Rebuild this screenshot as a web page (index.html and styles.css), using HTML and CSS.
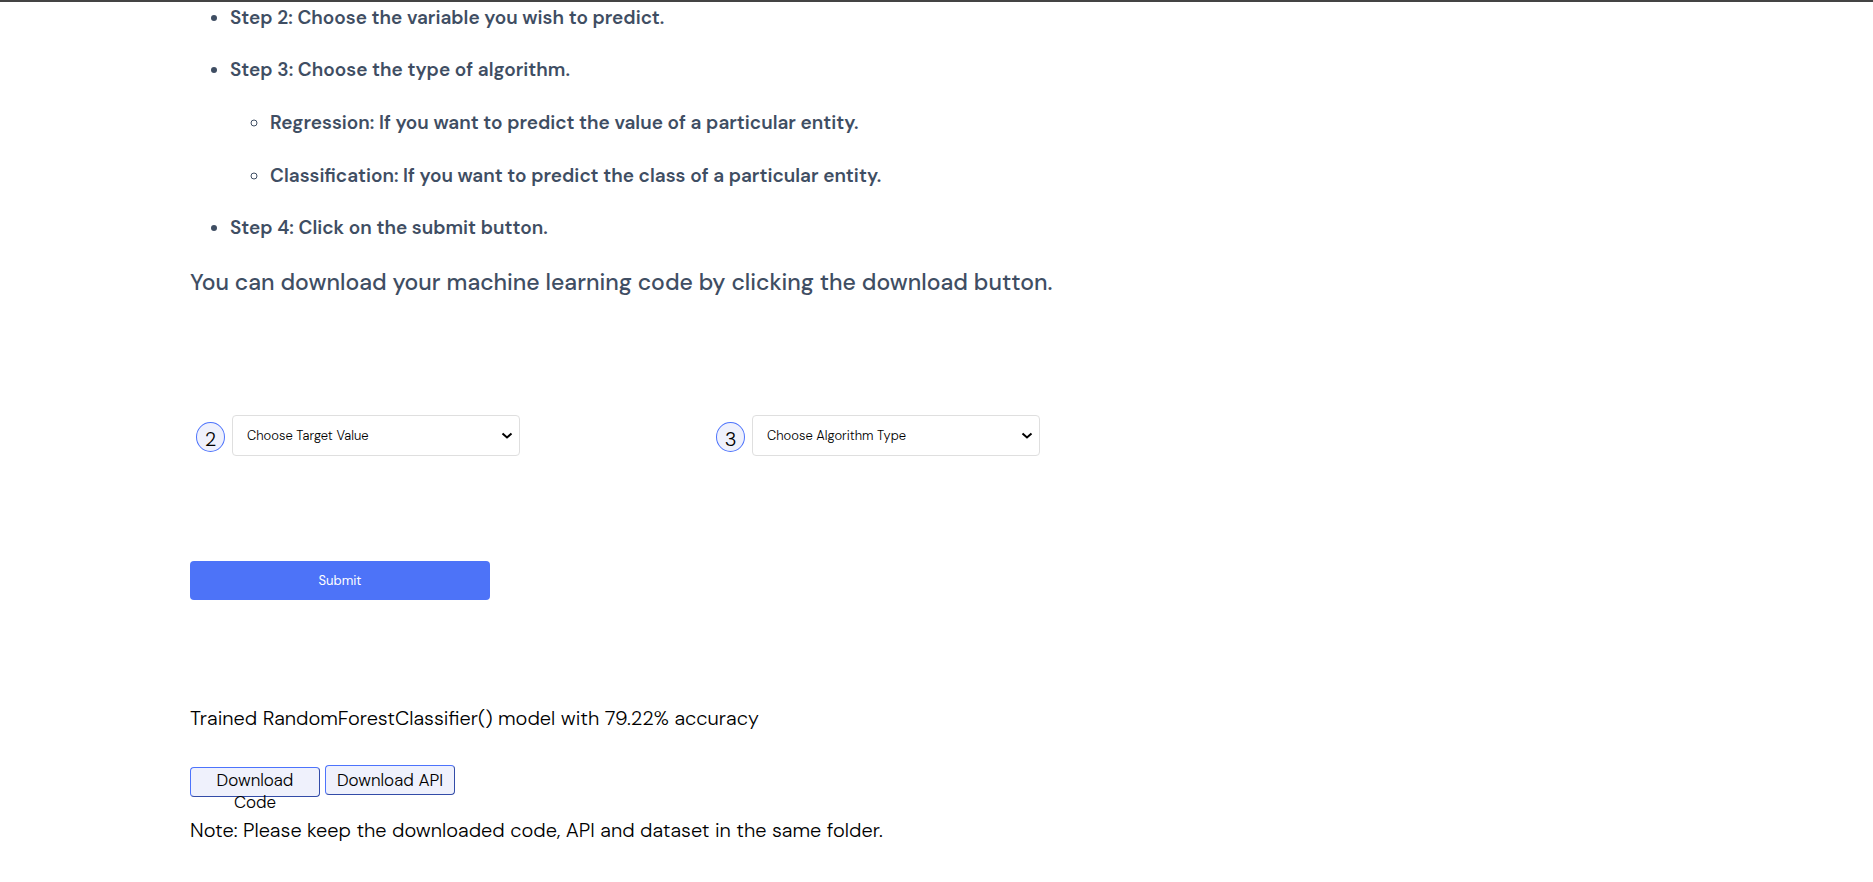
FILE: index.html
```
<!DOCTYPE html>
<html lang="en">
<head>
<meta charset="utf-8">
<title>Train a model</title>
<link rel="stylesheet" href="styles.css">
</head>
<body>
<main class="page">
  <section class="guide">
    <ul class="steps">
      <li>Step 2: Choose the variable you wish to predict.</li>
      <li>Step 3: Choose the type of algorithm.
        <ul class="substeps">
          <li>Regression: If you want to predict the value of a particular entity.</li>
          <li>Classification: If you want to predict the class of a particular entity.</li>
        </ul>
      </li>
      <li>Step 4: Click on the submit button.</li>
    </ul>
    <h2 class="summary">You can download your machine learning code by clicking the download button.</h2>
  </section>
  <form class="form">
    <div class="fields">
      <div class="field">
        <label class="badge" for="target">2</label>
        <div class="select-wrap">
          <select class="select" id="target"><option>Choose Target Value</option></select>
          <svg class="chevron" viewBox="0 0 12 8" aria-hidden="true"><path d="M1.5 1.500L6 5.500l4.500-4"/></svg>
        </div>
      </div>
      <div class="field">
        <label class="badge" for="algorithm">3</label>
        <div class="select-wrap">
          <select class="select" id="algorithm"><option>Choose Algorithm Type</option></select>
          <svg class="chevron" viewBox="0 0 12 8" aria-hidden="true"><path d="M1.5 1.500L6 5.500l4.500-4"/></svg>
        </div>
      </div>
    </div>
    <button class="submit" type="button">Submit</button>
  </form>
  <section class="result">
    <p class="text">Trained RandomForestClassifier() model with 79.22% accuracy</p>
    <div class="downloads">
      <button class="download" type="button">Download Code</button>
      <button class="download" type="button">Download API</button>
    </div>
    <p class="text">Note: Please keep the downloaded code, API and dataset in the same folder.</p>
  </section>
</main>
</body>
</html>
```
FILE: styles.css
```
* { box-sizing: border-box; }
body {
  margin: 0;
  background: #fff;
  color: #000;
  font-family: "DM Sans", Inter, sans-serif;
}
.page {
  border-top: 2px solid #444;
  padding: 3px 190px 32px;
}
.guide { color: #3f4e63; }
.steps, .substeps {
  display: grid;
  margin: 0;
  padding-left: 40px;
  font-size: 19px;
  font-weight: 600;
  line-height: 26px;
}
.steps { gap: 26px; }
.substeps { gap: 27px; margin-top: 27px; }
.summary {
  margin: 25px 0 0;
  font-size: 23px;
  font-weight: 500;
  line-height: 32px;
}
.form { margin-top: 117px; }
.fields {
  display: grid;
  grid-template-columns: 520px 1fr;
}
.field {
  display: flex;
  align-items: center;
  gap: 7px;
  padding-left: 6px;
}
.badge {
  width: 29px;
  height: 30px;
  margin-top: 3px;
  border: 1px solid #4d73fc;
  border-radius: 50%;
  background: #eff1fc;
  font-size: 20px;
  font-weight: 300;
  line-height: 32px;
  text-align: center;
}
.select-wrap {
  position: relative;
  width: 288px;
}
.select {
  display: block;
  width: 100%;
  height: 41px;
  padding: 0 14px;
  appearance: none;
  border: 1px solid #dfdfdf;
  border-radius: 4px;
  background: #fff;
  color: #000;
  font-family: inherit;
  font-size: 13px;
  font-weight: 300;
}
.chevron {
  position: absolute;
  top: 17px;
  right: 7px;
  width: 12px;
  height: 8px;
  fill: none;
  stroke: #000;
  stroke-width: 2;
  pointer-events: none;
}
.submit {
  display: block;
  width: 300px;
  height: 39px;
  margin-top: 105px;
  border: 0;
  border-radius: 4px;
  background: #4d73f8;
  color: #fff;
  font-family: inherit;
  font-size: 13px;
}
.result { margin-top: 105px; }
.text {
  margin: 0;
  font-size: 20px;
  font-weight: 300;
  line-height: 26px;
}
.downloads {
  display: flex;
  align-items: baseline;
  gap: 5px;
  margin: 34px 0 20px;
}
.download {
  width: 130px;
  height: 30px;
  padding: 1px 6px;
  border: 1px outset #4d73fc;
  border-radius: 4px;
  background: #eff1fc;
  color: #000;
  font-family: inherit;
  font-size: 17px;
  font-weight: 300;
  line-height: 22px;
}
```
